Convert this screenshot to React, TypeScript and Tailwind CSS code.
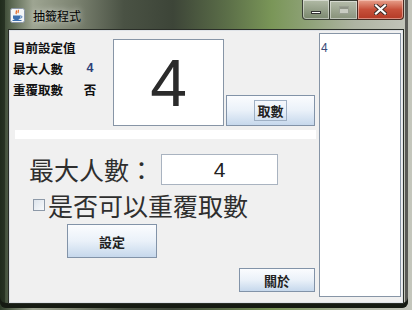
import React from 'react';

const cjk = "font-['Noto_Sans_CJK_TC','Noto_Sans_CJK_SC',sans-serif]";
const latin = "font-['Liberation_Sans','DejaVu_Sans',sans-serif]";

const SwingButton: React.FC<{ label: string; className: string; focused?: boolean }> = ({ label, className, focused }) => (
  <div
    className={`flex items-center justify-center border border-[#8293a8] bg-gradient-to-b from-[#fbfcfe] via-[#eaf1f9] to-[#c6d8ec] ${className}`}
  >
    <span
      className={`${cjk} text-[13px] font-bold text-[#222] leading-none px-[2px] py-[3px] ${focused ? 'outline outline-1 outline-[#9fb0c4]' : ''}`}
    >
      {label}
    </span>
  </div>
);

const JavaIcon: React.FC = () => (
  <svg width="15" height="15" viewBox="0 0 15 15">
    <rect x="0.5" y="0.5" width="14" height="14" rx="2" fill="#f4f6f8" stroke="#8a96a6" />
    <path d="M6 2.5c1.5 1 -1 2 0.5 3.5M8 2c1.2 1 -0.8 2 0.4 3" stroke="#e0601a" strokeWidth="1.2" fill="none" />
    <path d="M3 7.5h7v2.2c0 1.4-1.3 2.3-3.5 2.3S3 11.1 3 9.7z" fill="#3b6fb0" />
    <path d="M10 8h1.2c1 0 1 2-0.4 2H10" stroke="#3b6fb0" strokeWidth="1" fill="none" />
    <path d="M2.5 12.5h9" stroke="#3b6fb0" strokeWidth="1" />
  </svg>
);

const App: React.FC = () => {
  return (
    <div className="w-[412px] h-[310px] overflow-hidden bg-[linear-gradient(90deg,#2f3d2a_0%,#5e6b55_3%,#9ea592_8%,#7d8472_18%,#4a5244_30%,#3d4538_42%,#5b6e48_55%,#7a9658_66%,#8fa278_75%,#aeb4a2_86%,#c4c6bc_100%)]">
      <div className="relative w-[408px] h-[308px] flex flex-col rounded-b-[6px] shadow-[inset_0_-5px_0_#151a12,inset_5px_0_0_rgba(20,30,18,0.55),inset_-3px_0_0_rgba(20,20,20,0.6)]">
        {/* Title bar */}
        <div className="h-[30px] flex items-start">
          <div className="flex items-center gap-[8px] pl-[10px] pt-[8px]">
            <JavaIcon />
            <span className={`${cjk} text-[12px] text-black leading-none [text-shadow:0_0_6px_rgba(255,255,255,0.9)]`}>抽籤程式</span>
          </div>
          <div className="ml-auto mr-[4px] flex h-[20px]">
            <div className="w-[28px] flex items-center justify-center rounded-bl-[4px] border border-t-0 border-[#3a3f36] bg-gradient-to-b from-[#b9c0b0]/80 to-[#6f7a66]/70 shadow-[inset_0_0_0_1px_rgba(255,255,255,0.45)]">
              <div className="w-[10px] h-[3px] bg-white border border-[#333] mt-[5px]" />
            </div>
            <div className="w-[27px] flex items-center justify-center border-y border-[#3a3f36] border-b bg-gradient-to-b from-[#b9c0b0]/80 to-[#7c866f]/70 shadow-[inset_0_0_0_1px_rgba(255,255,255,0.45)]">
              <div className="w-[10px] h-[8px] border border-[#9aa092] bg-[#c9ccc2] shadow-[inset_0_2px_0_#8e9386]" />
            </div>
            <div className="w-[47px] flex items-center justify-center rounded-br-[4px] border border-t-0 border-[#4a2a22] bg-gradient-to-b from-[#e7a08c] via-[#c7503a] to-[#b43a26] shadow-[inset_0_0_0_1px_rgba(255,220,210,0.5)]">
              <svg width="13" height="11" viewBox="0 0 13 11">
                <path d="M2 1.5l9 8M11 1.5l-9 8" stroke="#3a2a26" strokeWidth="4" strokeLinecap="square" />
                <path d="M2 1.5l9 8M11 1.5l-9 8" stroke="#ffffff" strokeWidth="2.2" strokeLinecap="square" />
              </svg>
            </div>
          </div>
        </div>

        {/* Client area */}
        <div className="ml-[9px] w-[394px] h-[273px] bg-[#f0f0f0] border border-[#dfe3e8] shadow-[0_0_0_1px_#2a2e28] flex">
          <div className="w-[308px] flex flex-col">
            {/* Current settings */}
            <div className="flex items-start h-[97px]">
              <div className={`${cjk} w-[100px] pl-[3px] pt-[6px] text-[12.5px] font-bold text-[#111] leading-[21px]`}>
                <div>目前設定值</div>
                <div className="flex">
                  <span className="w-[67px]">最大人數</span>
                  <span className={`${latin} w-[20px] text-center text-[#2e3f78]`}>4</span>
                </div>
                <div className="flex">
                  <span className="w-[67px]">重覆取數</span>
                  <span className="w-[20px] text-center font-bold">否</span>
                </div>
              </div>
              <div className="mt-[8px] ml-[3px] w-[111px] h-[87px] bg-white border border-[#8795a6] flex items-center justify-center">
                <span className={`${latin} text-[66px] leading-none text-[#2b2b2b]`}>4</span>
              </div>
              <SwingButton label="取數" focused className="ml-[2px] mt-[64px] w-[89px] h-[31px]" />
            </div>

            {/* Separator */}
            <div className="ml-[5px] w-[301px] h-[9px] bg-white mt-[2px]" />

            {/* Max people */}
            <div className="flex items-center mt-[15px] h-[31px]">
              <span className={`${cjk} ml-[19px] text-[25px] leading-none text-[#2e2e2e]`}>最大人數：</span>
              <div className="ml-[7px] w-[117px] h-[31px] bg-white border border-[#a9b3c0] flex items-center justify-center">
                <span className={`${latin} text-[21px] leading-none text-[#222]`}>4</span>
              </div>
            </div>

            {/* Repeat checkbox */}
            <div className="flex items-center mt-[7px] h-[26px]">
              <div className="ml-[23px] w-[12px] h-[12px] border border-[#8d99a8] bg-gradient-to-br from-[#dde4ec] to-[#f8fafc]" />
              <span className={`${cjk} ml-[3px] text-[25px] leading-none text-[#2e2e2e]`}>是否可以重覆取數</span>
            </div>

            <SwingButton label="設定" className="ml-[57px] mt-[6px] w-[90px] h-[34px]" />

            <SwingButton label="關於" className="ml-[229px] mt-[10px] w-[76px] h-[24px]" />
          </div>

          {/* Result list */}
          <div className="ml-[1px] mt-[2px] w-[82px] h-[264px] bg-white border border-[#8795a6] pl-[1px]">
            <span className={`${latin} text-[12px] leading-[14px] text-[#3a4a78]`}>4</span>
          </div>
        </div>
      </div>
    </div>
  );
};

export default App;
